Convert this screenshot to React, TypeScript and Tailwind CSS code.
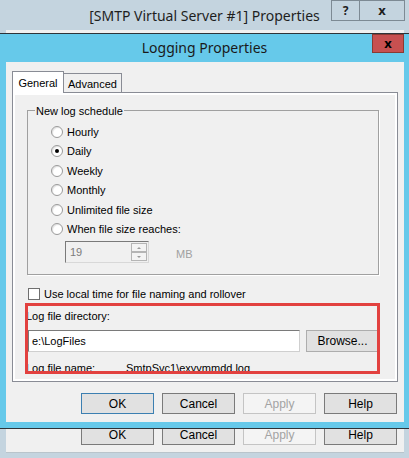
import React from "react";

const ui = { fontFamily: '"Liberation Sans", Arial, sans-serif' };
const title = { fontFamily: '"Noto Sans", "Open Sans", sans-serif' };

function Btn({ label, kind }: { label: string; kind?: "default" | "disabled" }) {
  const cls =
    kind === "default"
      ? "border-[#3c7fb1] bg-[#e1e1e1] text-black"
      : kind === "disabled"
      ? "border-[#c4c4c4] bg-[#f4f4f4] text-[#a3a3a3]"
      : "border-[#7a7a7a] bg-[#e1e1e1] text-black";
  return (
    <div className={`flex h-[21px] w-[73px] items-center justify-center border text-[12px] ${cls}`}>
      {label}
    </div>
  );
}

function Radio({ label, checked }: { label: string; checked?: boolean }) {
  return (
    <div className="flex h-[19.5px] items-center">
      <div className="flex h-[12px] w-[12px] items-center justify-center rounded-full border border-[#9a9a9a] bg-white shadow-[inset_1px_1px_1px_rgba(0,0,0,0.12)]">
        {checked && <div className="h-[4px] w-[4px] rounded-full bg-black" />}
      </div>
      <span className="ml-[4px] text-[11px] text-black">{label}</span>
    </div>
  );
}

export default function App() {
  return (
    <div className="relative h-[458px] w-[409px] overflow-hidden bg-[#c4d4df]" style={ui}>
      {/* parent window title bar */}
      <div className="relative flex h-[30px] items-center justify-center text-[14px] text-[#1e1e1e]" style={title}>
        <span className="mt-[1px]">[SMTP Virtual Server #1] Properties</span>
        <div className="absolute right-[4px] top-0 flex h-[21px]">
          <div className="flex w-[29px] items-center justify-center border border-[#7d8a94] text-[12px] font-bold">?</div>
          <div className="-ml-px flex w-[46px] items-center justify-center border border-[#7d8a94] text-[13px] font-bold">x</div>
        </div>
      </div>
      <div className="ml-[6px] mr-[5px] h-[3px] bg-[#f0f0f0]" />
      <div className="h-px bg-[#2e3338]" />

      {/* Logging Properties dialog */}
      <div className="flex flex-col bg-[#66c9ea]">
        <div className="relative flex h-[28px] items-center justify-center text-[14px] text-[#1a1a1a]" style={title}>
          <span className="-mt-[1px]">Logging Properties</span>
          <div className="absolute right-[5px] top-0 flex h-[19px] w-[32px] items-center justify-center border border-[#8a3a32] bg-[#c75050] text-[13px] font-bold text-black">
            x
          </div>
        </div>
        <div className="ml-[6px] mr-[5px] flex h-[360px] flex-col bg-[#f0f0f0]">
          {/* tabs */}
          <div className="ml-[6px] mt-[9px] flex h-[21px] items-end">
            <div className="relative z-10 -mb-px flex h-[22px] w-[52px] items-start justify-center border border-b-0 border-[#898c95] bg-white pt-[3px] text-[11px]">
              General
            </div>
            <div className="-ml-px flex h-[19px] w-[59px] items-start justify-center border border-b-0 border-[#898c95] bg-[#f0f0f0] pt-[2px] text-[11px]">
              Advanced
            </div>
          </div>
          <div className="ml-[6px] mr-[6px] h-[290px] border border-[#898c95]">
            <div className="flex h-full flex-col border-[2px] border-white bg-[#f0f0f0]">
              {/* group box */}
              <div className="relative ml-[12px] mt-[15px] h-[165px] w-[352px] border border-[#a0a0a0] shadow-[1px_1px_0_#ffffff]">
                <span className="absolute -top-[8px] left-[7px] bg-[#f0f0f0] px-[1px] text-[11px]">New log schedule</span>
                <div className="flex flex-col pl-[23px] pt-[11px]">
                  <Radio label="Hourly" />
                  <Radio label="Daily" checked />
                  <Radio label="Weekly" />
                  <Radio label="Monthly" />
                  <Radio label="Unlimited file size" />
                  <Radio label="When file size reaches:" />
                  <div className="ml-[14px] mt-[2px] flex items-center">
                    <div className="flex h-[22px] w-[84px] items-center border border-[#7a7a7a] border-b-[#d8d8d8] border-r-[#d8d8d8] bg-[#f0f0f0] pl-[4px] pr-[1px]">
                      <span className="flex-1 text-[11px] text-[#7c7c7c]">19</span>
                      <div className="flex h-[18px] w-[16px] flex-col">
                        <div className="flex h-[9px] items-center justify-center border border-[#b5b5b5] bg-[#f4f4f4]">
                          <div className="h-0 w-0 border-x-[2px] border-b-[2px] border-x-transparent border-b-[#9a9a9a]" />
                        </div>
                        <div className="flex h-[9px] items-center justify-center border border-[#b5b5b5] bg-[#f4f4f4]">
                          <div className="h-0 w-0 border-x-[2px] border-t-[2px] border-x-transparent border-t-[#9a9a9a]" />
                        </div>
                      </div>
                    </div>
                    <span className="ml-[27px] mt-[4px] text-[11px] text-[#a0a0a0]">MB</span>
                  </div>
                </div>
              </div>

              {/* checkbox */}
              <div className="ml-[13px] mt-[11px] flex items-center">
                <div className="h-[12px] w-[12px] border border-[#6f6f6f] bg-white" />
                <span className="ml-[4px] text-[11px]">Use local time for file naming and rollover</span>
              </div>

              <div className="ml-[11px] mt-[5px] text-[11px]">Log file directory:</div>
              <div className="ml-[13px] mt-[6px] flex">
                <div className="flex h-[22px] w-[272px] items-center border border-[#7a7a7a] border-b-[#cfcfcf] border-r-[#cfcfcf] bg-white pl-[3px] text-[11px]">
                  e:\LogFiles
                </div>
                <div className="ml-[6px] flex h-[22px] w-[73px] items-center justify-center border border-[#adadad] bg-[#e1e1e1] text-[12px]">
                  Browse...
                </div>
              </div>
              <div className="ml-[11px] mt-[8px] flex text-[11px]">
                <span className="w-[100px]">Log file name:</span>
                <span>SmtpSvc1\exyymmdd.log</span>
              </div>
            </div>
          </div>
          <div className="mr-[7px] mt-[11px] flex justify-end gap-[8px]">
            <Btn label="OK" kind="default" />
            <Btn label="Cancel" />
            <Btn label="Apply" kind="disabled" />
            <Btn label="Help" />
          </div>
        </div>
        <div className="h-[6px]" />
      </div>
      <div className="h-px bg-[#2e3338]" />

      {/* parent window bottom */}
      <div className="ml-[6px] mr-[5px] h-[24px] overflow-hidden border-b border-[#b9c4cb] bg-[#f0f0f0]">
        <div className="-mt-[5px] mr-[7px] flex justify-end gap-[8px]">
          <Btn label="OK" />
          <Btn label="Cancel" />
          <Btn label="Apply" kind="disabled" />
          <Btn label="Help" />
        </div>
      </div>

      {/* red annotation */}
      <div className="pointer-events-none absolute left-[25px] top-[303px] h-[71px] w-[355px] border-[3px] border-[#e2413f]" />
    </div>
  );
}
